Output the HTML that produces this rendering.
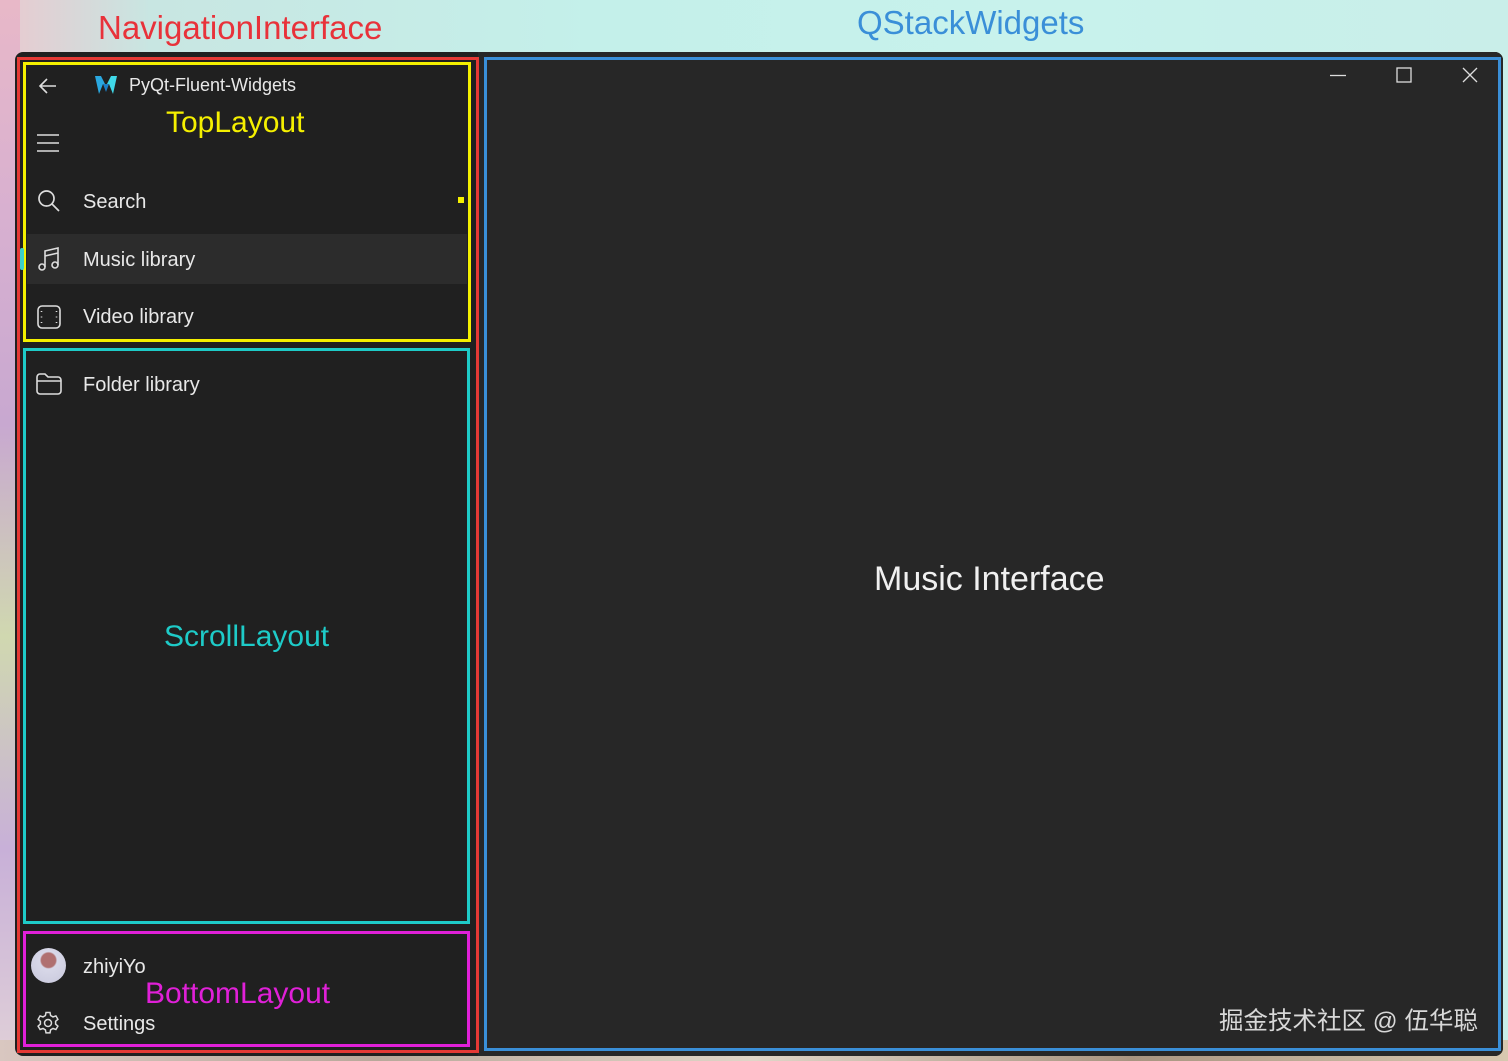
<!DOCTYPE html>
<html><head><meta charset="utf-8">
<style>
*{margin:0;padding:0;box-sizing:border-box}
body{width:1508px;height:1061px;overflow:hidden;position:relative;font-family:"Liberation Sans","Noto Sans CJK SC",sans-serif;
background:linear-gradient(90deg,#e9c9cf 0%,#c8e6e2 10%,#c4f0ea 40%,#c8f2ec 70%,#c9eee9 100%);}
.bgbot{position:absolute;left:0;top:1040px;width:1508px;height:21px;background:linear-gradient(90deg,#d9c7c0,#b9a89a,#e0d6c8,#a89480,#d8c8b0)}
.bgleft{position:absolute;left:0;top:0;width:20px;height:1061px;background:linear-gradient(180deg,#e8b8c8,#d8b0d0,#c8a8d0,#d0d8b0,#c8b0d8,#e0d0d8)}
.win{position:absolute;left:15px;top:52px;width:1488px;height:1004px;background:#202020;border-radius:8px}
.right{position:absolute;left:478px;top:52px;width:1025px;height:1004px;background:#272727;border-radius:0 8px 8px 0}
.box{position:absolute;border-style:solid}
.lbl{position:absolute;font-size:30px;white-space:nowrap}
.t{position:absolute;color:#e8e8e8;font-size:20px;white-space:nowrap}
svg{position:absolute}
</style></head><body>
<div class="bgleft"></div><div class="bgbot"></div>
<div class="win"></div>
<div class="right"></div>
<div class="lbl" style="left:98px;top:9px;color:#e8323a;font-size:33px">NavigationInterface</div>
<div class="lbl" style="left:857px;top:4px;color:#3a8fd8;font-size:33px">QStackWidgets</div>

<div class="box" style="left:17px;top:57px;width:462px;height:996px;border-width:3px;border-color:#e53935"></div>
<div class="box" style="left:23px;top:62px;width:448px;height:280px;border-width:3px;border-color:#f5f000"></div>
<div class="box" style="left:23px;top:348px;width:447px;height:576px;border-width:3px;border-color:#1ecbc8"></div>
<div class="box" style="left:23px;top:931px;width:447px;height:116px;border-width:3px;border-color:#e020d8"></div>
<div class="box" style="left:484px;top:57px;width:1017px;height:994px;border-width:3px;border-color:#3a8fd8"></div>

<div style="position:absolute;left:27px;top:234px;width:440px;height:50px;background:#2c2c2c"></div>
<div style="position:absolute;left:20px;top:248px;width:4px;height:22px;background:#3dd0c8;border-radius:2px"></div>

<svg style="left:36px;top:74px" width="24" height="24" viewBox="0 0 24 24" fill="none" stroke="#ddd" stroke-width="1.6"><path d="M20 12H4M11 5l-7 7 7 7"/></svg>
<svg style="left:94px;top:74px" width="24" height="22" viewBox="0 0 24 22"><path d="M1 2l4 18 4-10 2 0L7 2z" fill="#2aa8e0"/><path d="M23 2l-4 18-4-10-2 0L17 2z" fill="#40d8e8"/><path d="M9 10l3 8 3-8z" fill="#1a7fc8"/></svg>
<div class="t" style="left:129px;top:75px;font-size:18px">PyQt-Fluent-Widgets</div>
<div class="lbl" style="left:166px;top:106px;color:#f5f000">TopLayout</div>
<svg style="left:36px;top:132px" width="24" height="22" viewBox="0 0 24 22" stroke="#ddd" stroke-width="1.6"><path d="M1 3h22M1 11h22M1 19h22"/></svg>
<svg style="left:37px;top:189px" width="24" height="24" viewBox="0 0 24 24" fill="none" stroke="#ddd" stroke-width="1.7"><circle cx="9.5" cy="9.5" r="7.5"/><path d="M15 15l7 7"/></svg>
<div class="t" style="left:83px;top:191px">Search</div>
<div style="position:absolute;left:458px;top:197px;width:6px;height:6px;background:#f5f000"></div>
<svg style="left:37px;top:246px" width="24" height="26" viewBox="0 0 24 26" fill="none" stroke="#ddd" stroke-width="1.6"><circle cx="5" cy="21" r="3"/><circle cx="18" cy="19" r="3"/><path d="M8 21V5l13-3v17M8 10l13-3"/></svg>
<div class="t" style="left:83px;top:249px">Music library</div>
<svg style="left:37px;top:305px" width="24" height="24" viewBox="0 0 24 24" fill="none" stroke="#ddd" stroke-width="1.6"><rect x="1" y="1" width="22" height="22" rx="4"/><path d="M4.5 6v1M4.5 11.5v1M4.5 17v1M19.5 6v1M19.5 11.5v1M19.5 17v1"/></svg>
<div class="t" style="left:83px;top:306px">Video library</div>
<svg style="left:36px;top:373px" width="26" height="22" viewBox="0 0 26 22" fill="none" stroke="#ddd" stroke-width="1.6"><path d="M1 4a3 3 0 0 1 3-3h5l3 3h10a3 3 0 0 1 3 3v11a3 3 0 0 1-3 3H4a3 3 0 0 1-3-3z M1 8h24"/></svg>
<div class="t" style="left:83px;top:374px">Folder library</div>
<div class="lbl" style="left:164px;top:620px;color:#1ecbc8">ScrollLayout</div>

<div style="position:absolute;left:31px;top:948px;width:35px;height:35px;border-radius:50%;background:radial-gradient(circle at 50% 35%,#b07070 0 25%,#d8d8e8 30%,#c8c8dc 100%)"></div>
<div class="t" style="left:83px;top:956px">zhiyiYo</div>
<div class="lbl" style="left:145px;top:977px;color:#e020d8">BottomLayout</div>
<svg style="left:36px;top:1011px" width="24" height="24" viewBox="0 0 24 24" fill="none" stroke="#ddd" stroke-width="1.5"><path d="M10 1.5h4l.6 3 2.4 1.4 2.9-1 2 3.4-2.3 2v2.8l2.3 2-2 3.4-2.9-1-2.4 1.4-.6 3h-4l-.6-3-2.4-1.4-2.9 1-2-3.4 2.3-2V10.3L2.1 8.3l2-3.4 2.9 1L9.4 4.5z"/><circle cx="12" cy="12" r="3.5"/></svg>
<div class="t" style="left:83px;top:1013px">Settings</div>

<svg style="left:1328px;top:66px" width="160" height="20" viewBox="0 0 160 20" fill="none" stroke="#ddd" stroke-width="1.3"><path d="M2 9.5h16"/><rect x="69" y="2" width="14" height="14"/><path d="M135 2l14 14M149 2l-14 14"/></svg>

<div class="t" style="left:874px;top:560px;font-size:34px;color:#f0f0f0">Music Interface</div>
<div class="t" style="left:1219px;top:1002px;font-size:24.5px;color:#d8d8d8">掘金技术社区 @ 伍华聪</div>
</body></html>
